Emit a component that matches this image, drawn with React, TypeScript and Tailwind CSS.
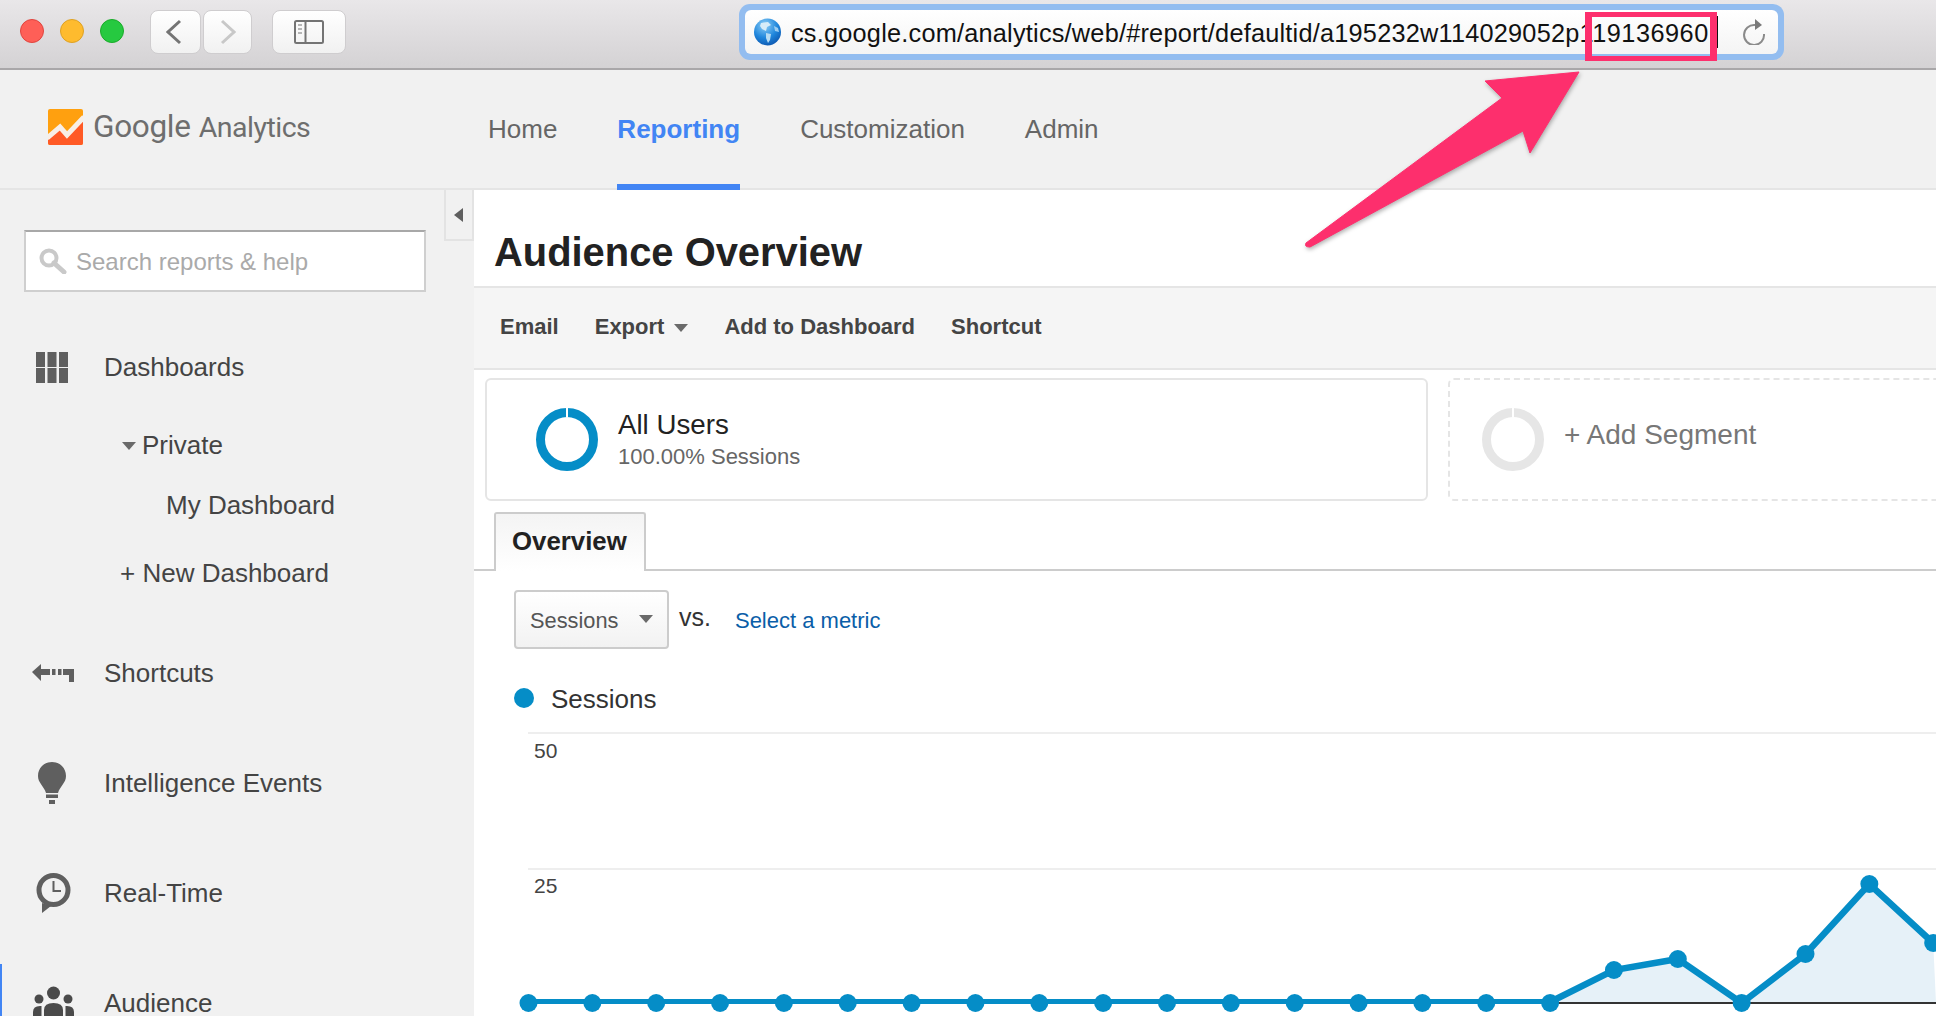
const BLUE = "#058dc7";

function LogoIcon() {
  return (
    <svg width="35" height="36" viewBox="0 0 35 36" className="shrink-0">
      <defs>
        <clipPath id="logoClip">
          <rect width="35" height="36" rx="2" />
        </clipPath>
      </defs>
      <g clipPath="url(#logoClip)">
        <rect width="35" height="36" fill="#ffa00f" />
        <polygon points="0,30 12,19 19,27 35,10 35,36 0,36" fill="#ff5a26" />
        <polyline points="-1,29 12,18 19,26 36,8" fill="none" stroke="#f8efe6" strokeWidth="5" />
      </g>
    </svg>
  );
}

function Globe() {
  return (
    <svg width="27" height="28" viewBox="0 0 27 28" className="ml-[9px] shrink-0">
      <defs>
        <radialGradient id="globeFill" cx="0.4" cy="0.25" r="0.85">
          <stop offset="0" stopColor="#8fd0f7" />
          <stop offset="0.55" stopColor="#1f86dc" />
          <stop offset="1" stopColor="#0a4fa8" />
        </radialGradient>
      </defs>
      <circle cx="13.5" cy="14" r="13.5" fill="url(#globeFill)" />
      <path d="M7 5 L14 4 L17 7 L13 9 L12 13 L8 11 L6 8 Z" fill="#d6ecf8" />
      <path d="M12 15 L17 16 L16 22 L14 25 L12 20 Z" fill="#b7dcf3" />
      <path d="M20 8 L24 10 L25 14 L21 13 Z" fill="#9ccdf0" />
    </svg>
  );
}

function Reload() {
  return (
    <svg width="24" height="26" viewBox="0 0 24 26" className="ml-auto mr-[11px] shrink-0">
      <path d="M13 5 A10 10 0 1 0 22 14" transform="translate(-1 1)" fill="none" stroke="#8a8a8a" strokeWidth="2" />
      <path d="M12 0 L19 6 L12 11 Z" fill="#7a7a7a" />
    </svg>
  );
}

function SmallTriangle({ className }: { className: string }) {
  return (
    <svg width="14" height="8" viewBox="0 0 14 8" className={className}>
      <path d="M0 0 H14 L7 8 Z" fill="#6a6a6a" />
    </svg>
  );
}

function GridIcon() {
  return (
    <svg width="32" height="31" viewBox="0 0 32 31">
      {[0, 11.5, 23].map((x) =>
        [0, 16].map((y) => <rect key={`${x}-${y}`} x={x} y={y} width="9" height="15" fill="#5f5f5f" />)
      )}
    </svg>
  );
}

function ShortcutIcon() {
  return (
    <svg width="42" height="18" viewBox="0 0 42 18" className="ml-[2px]">
      <path d="M0 8 L9 0 V5 H18 V11 H9 V17 Z" fill="#5f5f5f" />
      <rect x="20" y="5" width="3.5" height="6" fill="#5f5f5f" />
      <rect x="26" y="5" width="3.5" height="6" fill="#5f5f5f" />
      <path d="M31 5 H42 V18 H37 V11 H31 Z" fill="#5f5f5f" />
    </svg>
  );
}

function BulbIcon() {
  return (
    <svg width="28" height="42" viewBox="0 0 28 42">
      <path d="M14 0 C22 0 28 6 28 14 C28 21 22 24 20 31 H8 C6 24 0 21 0 14 C0 6 6 0 14 0 Z" fill="#5f5f5f" />
      <rect x="8" y="32.5" width="12" height="3.5" fill="#5f5f5f" />
      <rect x="11" y="38" width="6" height="4" fill="#5f5f5f" />
    </svg>
  );
}

function ClockIcon() {
  return (
    <svg width="35" height="40" viewBox="0 0 35 40" className="ml-[2px]">
      <path d="M6 30 L6 40 L15 33 Z" fill="#5f5f5f" />
      <circle cx="17.5" cy="17" r="14.5" fill="#f1f1f1" stroke="#5f5f5f" strokeWidth="5" />
      <path d="M17.5 8 V18 H25" fill="none" stroke="#5f5f5f" strokeWidth="2" />
    </svg>
  );
}

function PeopleIcon() {
  return (
    <svg width="41" height="34" viewBox="0 0 41 34">
      <circle cx="20.5" cy="7" r="6.5" fill="#4a4a4a" />
      <circle cx="6" cy="13" r="4.5" fill="#4a4a4a" />
      <circle cx="35" cy="13" r="4.5" fill="#4a4a4a" />
      <path d="M11 34 V24 Q11 17 20.5 17 Q30 17 30 24 V34 Z" fill="#4a4a4a" />
      <path d="M0 34 V26 Q0 20 7 20 H8.5 V34 Z" fill="#4a4a4a" />
      <path d="M41 34 V26 Q41 20 34 20 H32.5 V34 Z" fill="#4a4a4a" />
    </svg>
  );
}

function Donut({ color, stroke, gap }: { color: string; stroke: number; gap: string }) {
  return (
    <svg width="62" height="63" viewBox="0 0 62 63" className="shrink-0">
      <ellipse cx="31" cy="31.5" rx={31 - stroke / 2} ry={31.5 - stroke / 2} fill="none" stroke={color} strokeWidth={stroke} />
      <rect x="30" y="0" width="2" height={stroke} fill={gap} />
    </svg>
  );
}

function NavRow({ icon, label }: { icon: React.ReactNode; label: string }) {
  return (
    <div className="flex h-10 items-center">
      <div className="flex w-[104px] justify-center">{icon}</div>
      <span>{label}</span>
    </div>
  );
}

function Sidebar() {
  return (
    <aside className="relative w-[474px] shrink-0 overflow-hidden bg-[#f1f1f1] text-[26px] text-[#444]">
      <div className="ml-6 mt-10 flex h-[62px] w-[402px] items-center border-2 border-[#cfcfcf] border-t-[#a8a8a8] bg-white">
        <svg width="28" height="26" viewBox="0 0 28 26" className="ml-[13px]">
          <circle cx="10" cy="10" r="7.5" fill="none" stroke="#c9c9c9" strokeWidth="4" />
          <path d="M15 15 L25 24" stroke="#c9c9c9" strokeWidth="5" strokeLinecap="round" />
        </svg>
        <span className="ml-[9px] mt-[2px] text-[24px] text-[#aaa]">Search reports &amp; help</span>
      </div>

      <div className="mt-[55px]">
        <NavRow icon={<GridIcon />} label="Dashboards" />
      </div>
      <div className="mt-[38px] flex h-10 items-center pl-[122px]">
        <SmallTriangle className="mr-[6px] mt-[2px]" />
        <span>Private</span>
      </div>
      <div className="mt-5 flex h-10 items-center pl-[166px]">My Dashboard</div>
      <div className="mt-7 flex h-10 items-center pl-[120px]">+ New Dashboard</div>

      <div className="mt-[60px]">
        <NavRow icon={<ShortcutIcon />} label="Shortcuts" />
      </div>
      <div className="mt-[70px]">
        <NavRow icon={<BulbIcon />} label="Intelligence Events" />
      </div>
      <div className="mt-[70px]">
        <NavRow icon={<ClockIcon />} label="Real-Time" />
      </div>
      <div className="mt-[51px] h-[60px] border-l-2 border-[#4285f4] pt-[19px]">
        <div className="flex h-10 items-center">
          <div className="flex w-[102px] justify-center">
            <PeopleIcon />
          </div>
          <span>Audience</span>
        </div>
      </div>

      <div className="absolute right-0 top-0 flex h-[51px] w-[30px] items-center justify-center border-x-2 border-b-2 border-[#e3e3e3] bg-[#f1f1f1]">
        <svg width="9" height="14" viewBox="0 0 9 14" className="mr-[2px]">
          <path d="M9 0 V14 L0 7 Z" fill="#5f5f5f" />
        </svg>
      </div>
    </aside>
  );
}

const ys = [250, 239, 283, 234, 164, 223];

function Chart() {
  const xAt = (k: number) => 54.5 + 63.85 * k;
  const flat = Array.from({ length: 17 }, (_, k) => k);
  const rise = ys.map((y, i) => ({ x: xAt(17 + i), y }));
  const line = [`${xAt(16)},282`, ...rise.map((p) => `${p.x},${p.y}`)].join(" ");
  const area = [`${xAt(16)},283`, ...rise.map((p) => `${p.x},${p.y}`), `1462,283`].join(" ");

  return (
    <svg width="1462" height="296" viewBox="0 0 1462 296" className="mt-3 block">
      <rect x="54" y="12" width="1408" height="2" fill="#eeeeee" />
      <rect x="54" y="148" width="1408" height="2" fill="#eeeeee" />
      <text x="60" y="38" fontSize="21" fill="#444">50</text>
      <text x="60" y="173" fontSize="21" fill="#444">25</text>
      <polygon points={area} fill="#e6f1f8" />
      <rect x={xAt(16)} y="282" width="400" height="2" fill="#333333" />
      <line x1="54.5" y1="281.5" x2={xAt(16)} y2="281.5" stroke={BLUE} strokeWidth="5" />
      <polyline points={line} fill="none" stroke={BLUE} strokeWidth="6.5" />
      {flat.map((k) => (
        <circle key={k} cx={xAt(k)} cy="283" r="9" fill={BLUE} />
      ))}
      {rise.map((p) => (
        <circle key={p.x} cx={p.x} cy={p.y} r="9" fill={BLUE} />
      ))}
    </svg>
  );
}

function Main() {
  return (
    <main className="min-w-0 flex-1 overflow-hidden bg-white">
      <div className="h-[98px] border-b-2 border-[#e5e5e5] pl-5 pt-[27px]">
        <h1 className="text-[39.9px] font-bold leading-[70px] text-[#222]">Audience Overview</h1>
      </div>
      <div className="flex h-[82px] items-center gap-9 border-b-2 border-[#e5e5e5] bg-[#f5f5f5] pb-[3px] pl-[26px] text-[22px] font-bold text-[#444]">
        <span>Email</span>
        <span className="flex items-center">
          Export
          <SmallTriangle className="ml-[10px] mt-[2px]" />
        </span>
        <span>Add to Dashboard</span>
        <span>Shortcut</span>
      </div>

      <div className="flex gap-5 pl-[11px] pt-2">
        <div className="flex h-[123px] w-[943px] shrink-0 items-center rounded-[6px] border-2 border-[#e5e5e5] pl-[49px]">
          <Donut color={BLUE} stroke={9} gap="#ffffff" />
          <div className="ml-5">
            <div className="text-[27.7px] leading-[34px] text-[#222]">All Users</div>
            <div className="text-[22px] leading-[30px] text-[#666]">100.00% Sessions</div>
          </div>
        </div>
        <div className="flex h-[123px] w-[600px] shrink-0 items-center rounded-[6px] border-2 border-dashed border-[#e5e5e5] pl-8">
          <Donut color="#e6e6e6" stroke={9} gap="#ffffff" />
          <span className="ml-5 mt-[-10px] text-[28px] text-[#777]">+ Add Segment</span>
        </div>
      </div>

      <div className="mt-[11px] h-[59px] border-b-2 border-[#cccccc] pl-5">
        <div className="h-[59px] w-[152px] rounded-t-[3px] border-x-2 border-t-2 border-[#cccccc] bg-linear-to-b from-[#f4f4f4] to-white pl-4 text-[25.8px] font-bold leading-[55px] text-[#222]">
          Overview
        </div>
      </div>

      <div className="ml-10 mt-[19px] flex items-center">
        <div className="flex h-[59px] w-[155px] items-center justify-between rounded-[4px] border-2 border-[#cccccc] bg-linear-to-b from-white to-[#f2f2f2] pl-[14px] pr-[14px] text-[21.8px] text-[#555]">
          <span className="mt-[3px]">Sessions</span>
          <SmallTriangle className="mt-[-2px]" />
        </div>
        <span className="ml-[10px] mt-[-4px] text-[25px] text-[#333]">vs.</span>
        <span className="ml-[24px] mt-[2px] text-[22px] text-[#0a5ea8]">Select a metric</span>
      </div>

      <div className="ml-10 mt-[39px] flex h-5 items-center">
        <span className="h-5 w-5 rounded-full bg-[#058dc7]" />
        <span className="ml-[17px] mt-[2px] text-[26px] text-[#333]">Sessions</span>
      </div>

      <Chart />
    </main>
  );
}

export default function App() {
  return (
    <div className="relative flex h-[1016px] w-[1936px] flex-col overflow-hidden font-['Liberation_Sans',Arial,sans-serif]">
      <div className="flex h-[70px] shrink-0 items-center border-b-2 border-[#a9a7a9] bg-linear-to-b from-[#e9e7e9] to-[#d4d2d4] pb-1 pl-5">
        <div className="mt-[-2px] flex gap-4">
          <span className="h-6 w-6 rounded-full border border-[#e0443e] bg-[#fe5f57]" />
          <span className="h-6 w-6 rounded-full border border-[#dea123] bg-[#febb2e]" />
          <span className="h-6 w-6 rounded-full border border-[#1aab29] bg-[#26c940]" />
        </div>
        <button className="ml-[26px] flex h-11 w-[51px] items-center justify-center rounded-[8px] border border-[#cfcdcf] bg-linear-to-b from-white to-[#f1f1f1]">
          <svg width="16" height="26" viewBox="0 0 16 26" className="mr-1">
            <path d="M14 2 L2 13 L14 24" fill="none" stroke="#747474" strokeWidth="3" />
          </svg>
        </button>
        <button className="ml-[2px] flex h-11 w-[49px] items-center justify-center rounded-[8px] border border-[#cfcdcf] bg-linear-to-b from-white to-[#f1f1f1]">
          <svg width="16" height="26" viewBox="0 0 16 26">
            <path d="M2 2 L14 13 L2 24" fill="none" stroke="#c8c8c8" strokeWidth="3" />
          </svg>
        </button>
        <button className="ml-5 flex h-11 w-[74px] items-center justify-center rounded-[8px] border border-[#cfcdcf] bg-linear-to-b from-white to-[#f1f1f1]">
          <svg width="30" height="24" viewBox="0 0 30 24">
            <rect x="1" y="1" width="28" height="22" rx="1.5" fill="none" stroke="#747474" strokeWidth="2" />
            <rect x="10.5" y="1" width="2" height="22" fill="#747474" />
            <path d="M4 5 H8 M4 9 H8 M4 13 H8" stroke="#a0a0a0" strokeWidth="1.5" />
          </svg>
        </button>
        <div className="ml-[393px] h-14 w-[1045px] rounded-[11px] bg-[#93bdf0] p-[6px]">
          <div className="flex h-11 items-center rounded-[6px] bg-linear-to-b from-white to-[#f4f4f4]">
            <Globe />
            <span className="ml-[10px] mt-[3px] whitespace-nowrap text-[25.3px] text-[#111]">
              <span className="tracking-[0.22px]">cs.google.com/analytics/web/#report/defaultid/a195232w114029052p</span>
              <span className="tracking-[0.5px]">119136960</span>
            </span>
            <span className="ml-[7px] h-8 w-[2px] bg-[#111]" />
            <Reload />
          </div>
        </div>
      </div>

      <header className="flex h-[120px] shrink-0 items-stretch border-b-2 border-[#e5e5e5] bg-[#f1f1f1]">
        <div className="flex w-[488px] shrink-0 items-center pl-12">
          <div className="mt-[-4px] flex items-center">
            <LogoIcon />
            <span className="ml-[10px] whitespace-nowrap font-['Roboto',sans-serif] text-[#6e6e6e]">
              <span className="text-[31.5px] tracking-[-0.3px]">Google</span>
              <span className="ml-2 text-[28.5px] tracking-[-0.5px]">Analytics</span>
            </span>
          </div>
        </div>
        <nav className="flex gap-[60px] text-[26px] text-[#666]">
          <a className="flex items-center">Home</a>
          <a className="mb-[-2px] mt-[-2px] flex items-center border-b-[6px] border-t-[6px] border-b-[#4285f4] border-t-transparent font-bold text-[#4285f4]">
            Reporting
          </a>
          <a className="flex items-center">Customization</a>
          <a className="flex items-center">Admin</a>
        </nav>
      </header>

      <div className="flex min-h-0 flex-1">
        <Sidebar />
        <Main />
      </div>

      {/* annotation drawn on top of the screenshot */}
      <div className="absolute left-[1585px] top-3 h-[49px] w-[132px] border-x-[7px] border-y-[5px] border-[#fd2f6d]" />
      <svg
        width="1936"
        height="1016"
        viewBox="0 0 1936 1016"
        className="pointer-events-none absolute left-0 top-0 drop-shadow-[1px_2px_2px_rgba(0,0,0,0.3)]"
      >
        <path
          d="M1579 72 L1485 81 L1502 98 L1306 243 Q1304 247 1310 247 L1523 131 L1530 153 Z"
          fill="#fd2f6d"
          stroke="#fd2f6d"
          strokeWidth="1"
          strokeLinejoin="round"
        />
      </svg>
    </div>
  );
}
